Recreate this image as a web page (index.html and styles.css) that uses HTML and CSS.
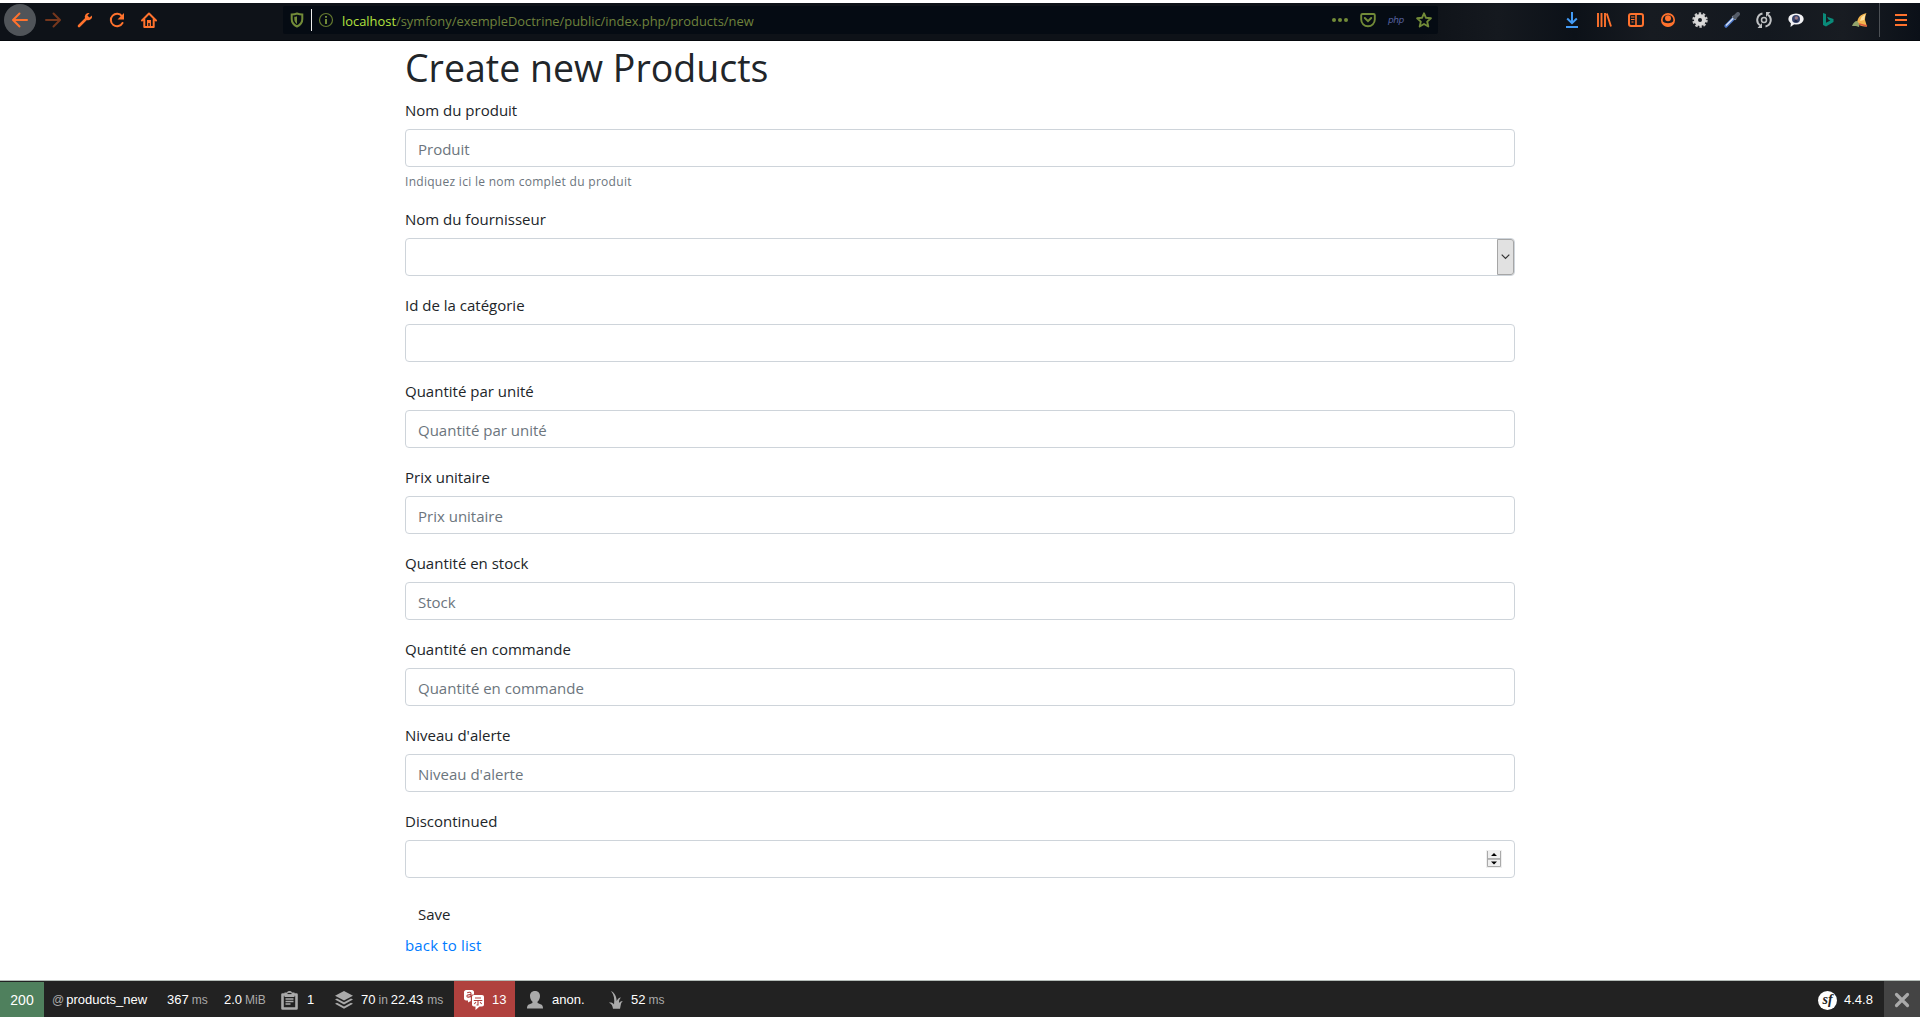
FILE: index.html
```html
<!DOCTYPE html>
<html lang="fr">
<head>
<meta charset="utf-8">
<title>Create new Products</title>
<link rel="stylesheet" href="styles.css">
</head>
<body>
<header class="browser">
  <nav class="nav-buttons">
    <span class="cell back"><svg width="18" height="16" viewBox="0 0 18 16"><path d="M16 8H2.500M8.500 1.500L2 8l6.500 6.500" fill="none" stroke="#ff722d" stroke-width="2" stroke-linecap="round" stroke-linejoin="round"/></svg></span>
    <span class="cell"><svg width="18" height="16" viewBox="0 0 18 16"><path d="M2 8h13.500M9.500 1.500L16 8l-6.500 6.500" fill="none" stroke="#76371d" stroke-width="2" stroke-linecap="round" stroke-linejoin="round"/></svg></span>
    <span class="cell"><svg width="16" height="16" viewBox="0 0 16 16"><path d="M2 14l7-7" stroke="#ff722d" stroke-width="2.600" stroke-linecap="round"/><path d="M12.600 1A4 4 0 0 0 8 6.300L9.700 8A4 4 0 0 0 15 3.400l-2.600 2.200-2-2z" fill="#ff722d"/></svg></span>
    <span class="cell"><svg width="16" height="16" viewBox="0 0 16 16"><path d="M13.500 11A6.200 6.200 0 1 1 13 4.300" fill="none" stroke="#ff722d" stroke-width="2" stroke-linecap="round"/><path d="M15 1v6.500H8.500z" fill="#ff722d"/></svg></span>
    <span class="cell"><svg width="16" height="16" viewBox="0 0 16 16"><path d="M1 8.500L8 1.500l7 7M3.300 7.500V15h9.400V7.500" fill="none" stroke="#ff722d" stroke-width="2" stroke-linecap="round" stroke-linejoin="round"/><path d="M6 8h4v6H8.700v-3H7.300v3H6z" fill="#ff722d"/></svg></span>
  </nav>
  <div class="urlbar">
    <span class="shield"><svg width="14" height="16" viewBox="0 0 14 16"><path d="M7 1.500c2 .8 3.800 1 5.300 1V7c0 3.500-2 6-5.300 7.500C3.700 13 1.700 10.500 1.700 7V2.500c1.500 0 3.300-.2 5.300-1z" fill="none" stroke="#728b38" stroke-width="2"/><path d="M7 4.200c-1 .4-1.800.6-2.700.6V7c0 2.300 1 3.700 2.700 4.900z" fill="#728b38"/></svg></span>
    <span class="url-divider"></span>
    <span class="info"><svg width="16" height="16" viewBox="0 0 16 16"><circle cx="8" cy="8" r="6.500" fill="none" stroke="#64792f" stroke-width="1.200"/><path d="M8 7v5M8 4v1.800" stroke="#728b38" stroke-width="2"/></svg></span>
    <span class="url"><b>localhost</b>/symfony/exempleDoctrine/public/index.php/products/new</span>
    <span class="url-actions">
      <svg width="16" height="16" viewBox="0 0 16 16"><g fill="#728b38"><circle cx="2" cy="8" r="2"/><circle cx="8" cy="8" r="2"/><circle cx="14" cy="8" r="2"/></g></svg>
      <svg width="16" height="16" viewBox="0 0 16 16"><path d="M2.500 2h11c.6 0 1.300.4 1.300 1.200V7.500a6.800 6.800 0 0 1-13.600 0V3.200C1.200 2.400 1.900 2 2.500 2z" fill="none" stroke="#728b38" stroke-width="1.900"/><path d="M4.800 6L8 9.200 11.200 6" fill="none" stroke="#728b38" stroke-width="2" stroke-linecap="round"/></svg>
      <i class="php">php</i>
      <svg width="16" height="16" viewBox="0 0 16 16"><path d="M8 1.300l2 4.500 4.900.5-3.700 3.300 1.100 4.900L8 12l-4.300 2.500 1.100-4.900L1.100 6.300 6 5.800z" fill="none" stroke="#728b38" stroke-width="1.900" stroke-linejoin="round"/></svg>
    </span>
  </div>
  <div class="extensions">
    <span class="cell"><svg width="14" height="16" viewBox="0 0 14 16"><path d="M7 0v11M2.200 6.500L7 11.200l4.800-4.700M1 15h12" fill="none" stroke="#439bf5" stroke-width="2"/></svg></span>
    <span class="cell"><svg width="16" height="16" viewBox="0 0 16 16"><path d="M2 1v14M5.500 1v14M9 1v14M10.800 1.500L15 14.500" fill="none" stroke="#ff722d" stroke-width="1.900"/></svg></span>
    <span class="cell"><svg width="16" height="16" viewBox="0 0 16 16"><rect x="1" y="2" width="14" height="12" rx="2" fill="none" stroke="#ff722d" stroke-width="2"/><path d="M8 2v12" stroke="#ff722d" stroke-width="1.600"/><path d="M3 5h3.500M3 7.500h3.500M3.500 10h2" stroke="#ff722d"/></svg></span>
    <span class="cell"><svg width="16" height="16" viewBox="0 0 16 16"><circle cx="8" cy="8" r="6.200" fill="none" stroke="#ff722d" stroke-width="1.700"/><circle cx="8" cy="6.300" r="3" fill="#ff722d"/><path d="M3 9.500c1.500 2.200 8.500 2.200 10 0l.5 1.500c-2 4.500-9 4.500-11 0z" fill="#ff722d"/></svg></span>
    <span class="cell"><svg width="16" height="16" viewBox="0 0 16 16"><circle cx="8" cy="8" r="6.200" fill="none" stroke="#c5c5c5" stroke-width="3" stroke-dasharray="2.300 1.595"/><circle cx="8" cy="8" r="4" fill="none" stroke="#d8d8d8" stroke-width="4"/></svg></span>
    <span class="cell"><svg width="16" height="16" viewBox="0 0 16 16"><path d="M2 14l8-8" stroke="#4d78c8" stroke-width="3.200" stroke-linecap="round"/><path d="M2 13.500l7.500-7.500" stroke="#d8e3f4" stroke-width="1.200"/><path d="M8.500 4l3.500 3.500" stroke="#8b9099" stroke-width="2"/><path d="M11 5l3-3" stroke="#555c68" stroke-width="4" stroke-linecap="round"/></svg></span>
    <span class="cell"><svg width="16" height="16" viewBox="0 0 16 16"><path d="M6.500 1.500A6.600 6.600 0 0 0 4 13.300M9.500 14.500A6.600 6.600 0 0 0 12 2.700" fill="none" stroke="#bfc1c3" stroke-width="2"/><path d="M6 11v5H1.500zM10 5V0h4.500z" fill="#bfc1c3"/><circle cx="8" cy="8" r="2.500" fill="none" stroke="#bfc1c3" stroke-width="1.500"/></svg></span>
    <span class="cell"><svg width="16" height="16" viewBox="0 0 16 16"><ellipse cx="8" cy="7" rx="7.700" ry="5.500" fill="#f2f2f4"/><path d="M3 10l-.5 5L7 11.500z" fill="#f2f2f4"/><circle cx="8" cy="7" r="4" fill="#38436b"/><circle cx="8.300" cy="6" r="1.700" fill="#9c7a82"/><path d="M5.500 9.500L8 7.500l2 2.500z" fill="#161e3b"/></svg></span>
    <span class="cell"><svg width="16" height="16" viewBox="0 0 16 16"><path d="M3 1l3 1v8.800l4.400-2.300-2-1L7 4.700l6.500 2.400V10L6 14.500 3 13z" fill="#0a8a79"/></svg></span>
    <span class="cell"><svg width="16" height="16" viewBox="0 0 16 16"><path d="M14.500 1C10 2 7 4 6 7l-1 3c2 4 6 5 10 4.500L13 8c0-3 .5-5 1.500-7z" fill="#f3b44d"/><path d="M13.500 2L9.500 5 8 9l4-1z" fill="#ffe2a1"/><path d="M5 9c-2 0-4 2-5 5h4l3 1c1-2 0-4-2-6z" fill="#91a36c"/><path d="M7 12l8 2" stroke="#d8573d" stroke-width="1.500"/></svg></span>
    <span class="ext-divider"></span>
    <span class="menu"><svg width="12" height="12" viewBox="0 0 12 12"><path d="M0 1h12M0 6h12M0 11h12" stroke="#ff722d" stroke-width="2"/></svg></span>
  </div>
</header>

<main class="container">
  <h1>Create new Products</h1>
  <form>
    <div class="group"><label for="name">Nom du produit</label><input class="control" id="name" placeholder="Produit"><small>Indiquez ici le nom complet du produit</small></div>
    <div class="group"><label for="supplier">Nom du fournisseur</label>
      <div class="control select" id="supplier"><span class="select-arrow"><svg width="9" height="6" viewBox="0 0 9 6"><path d="M.7.7l3.800 3.800L8.300.7" fill="none" stroke="#333" stroke-width="1.200"/></svg></span></div></div>
    <div class="group"><label for="category">Id de la catégorie</label><input class="control" id="category"></div>
    <div class="group"><label for="quantity">Quantité par unité</label><input class="control" id="quantity" placeholder="Quantité par unité"></div>
    <div class="group"><label for="price">Prix unitaire</label><input class="control" id="price" placeholder="Prix unitaire"></div>
    <div class="group"><label for="stock">Quantité en stock</label><input class="control" id="stock" placeholder="Stock"></div>
    <div class="group"><label for="order">Quantité en commande</label><input class="control" id="order" placeholder="Quantité en commande"></div>
    <div class="group"><label for="level">Niveau d'alerte</label><input class="control" id="level" placeholder="Niveau d'alerte"></div>
    <div class="group"><label for="discontinued">Discontinued</label>
      <div class="control number" id="discontinued"><svg width="16" height="18" viewBox="0 0 16 18"><path d="M0 0h16v18H0z" fill="#efefef"/><path d="M1.500 1v15.500h13V1M1 8.800h14" fill="none" stroke="#aaa"/><path d="M1 8.300h14v1.400H1z" fill="#aaa"/><path d="M8 3L5 6h6zM8 14.500l-3-3h6z" fill="#000"/></svg></div></div>
    <button type="button" class="save">Save</button>
  </form>
  <a class="back-link" href="#">back to list</a>
</main>

<footer class="toolbar">
  <div class="block status">200</div>
  <div class="block request"><span class="unit">@</span><span>products_new</span></div>
  <div class="block time"><span>367</span><span class="unit">ms</span></div>
  <div class="block memory"><span>2.0</span><span class="unit">MiB</span></div>
  <div class="block forms"><svg width="17" height="19" viewBox="0 0 17 19"><path d="M1.500 3.500h14v14h-14z" fill="none" stroke="#aaa" stroke-width="2.600" stroke-linejoin="round"/><path d="M3.500 1.500h2.500c.5-2 4.500-2 5 0h2.500V6h-10z" fill="#aaa"/><path d="M6.500 2.500h4" stroke="#222" stroke-width="1.200"/><path d="M4.500 8h8M4.500 10.500h8M4.500 13h5" stroke="#aaa" stroke-width="1.500"/></svg><span>1</span></div>
  <div class="block db"><svg width="18" height="18" viewBox="0 0 18 18"><path d="M9 0l9 4.700-9 4.700L0 4.700z" fill="#aaa"/><path d="M0 8.500l2-1 7 3.700 7-3.700 2 1-9 4.900zM0 12.700l2-1 7 3.700 7-3.700 2 1L9 17.800z" fill="#aaa"/></svg><span>70</span><span class="unit">in</span><span>22.43</span><span class="unit">ms</span></div>
  <div class="block translation"><svg width="20" height="20" viewBox="0 0 20 20"><path d="M2 0h6c1 0 2 1 2 2v2.500H9C7.500 4.500 6.800 5.500 6.800 7v4L4 12.500V10.500H2c-1 0-2-.8-2-2V2C0 1 1 0 2 0z" fill="#fff"/><path d="M3.200 2.800c1.500-.8 3.800-.8 3.800.8v3.600M7 4.800c-3-.5-4.500.5-4 1.700.5 1 2.700.8 4-.6" fill="none" stroke="#b0413e" stroke-width="1.100"/><path d="M10 5h8c1.200 0 2 .8 2 2v7.500c0 1.200-.8 2-2 2h-2.500L11.500 20v-3.500H10c-1.200 0-2-.8-2-2V7c0-1.200.8-2 2-2z" fill="#fff"/><path d="M11 8h6M9.800 10.500h8.500M14 10.500V15h-1.500M12 12l-1.700 2M16 12l1.700 2" fill="none" stroke="#b0413e" stroke-width="1.100"/></svg><span>13</span></div>
  <div class="block user"><svg width="16" height="18" viewBox="0 0 16 18"><path d="M8 0c3.400 0 5 2.200 5 5 0 2.500-1.100 4.500-2.500 5.800l.1 1.200 2.900 1.200c1.900.6 2.500 2 2.500 4.300H0c0-2.300.6-3.700 2.500-4.300L5.400 12l.1-1.200C4.100 9.500 3 7.500 3 5c0-2.800 1.600-5 5-5z" fill="#aaa"/></svg><span>anon.</span></div>
  <div class="block twig"><svg width="14" height="18" viewBox="0 0 14 18"><path d="M2 0c4 2 5.500 6 5.700 10C8.500 8 10 6.700 12 6.500c-1.800 1.500-2 3-2 5.500 1-1.500 2-2 4-1.800-2.500 1.500-2 4-3 7.500H4c-.5-3-1.200-4.800-4-6 2.300-.3 3.800.2 5 1.700C5.700 8.500 5.200 4 2 0z" fill="#aaa"/></svg><span>52</span><span class="unit">ms</span></div>
  <div class="block version"><span class="sf-logo">sf</span><span>4.4.8</span></div>
  <div class="block close"><svg width="16" height="16" viewBox="0 0 16 16"><path d="M2.500 2.500l11 11M13.500 2.500l-11 11" stroke="#aaa" stroke-width="3.200" stroke-linecap="round"/></svg></div>
</footer>
</body>
</html>
```
FILE: styles.css
```css
* { box-sizing: border-box; }
body {
  margin: 0;
  height: 1021px;
  padding: 3px 0 4px;
  display: flex;
  flex-direction: column;
  background: #fff;
  color: #212529;
  font: 15px/24px "Open Sans", "Noto Sans", sans-serif;
  overflow: hidden;
}
svg { display: block; flex: none; }

/* Browser chrome */
.browser {
  height: 38px;
  flex: none;
  display: flex;
  background: linear-gradient(90deg, #0e1218 0 74%, #15191f 78%, #0c1118 82%, #171b21 86%, #13181f 92%, #181c22 96%, #0b1018);
  border-bottom: 1px solid #05080c;
}
.nav-buttons { width: 283px; padding-left: 4px; display: flex; }
.cell { width: 32px; height: 34px; display: flex; align-items: center; justify-content: center; }
.nav-buttons .back { height: 32px; margin-top: 1px; border-radius: 50%; background: #505459; }
.nav-buttons .back + .cell { margin-left: 1px; }
.urlbar {
  width: 1155px;
  height: 28px;
  margin-top: 3px;
  padding-left: 7px;
  display: flex;
  align-items: center;
  background: #050b13;
  border-radius: 2px;
}
.url-divider { width: 1px; height: 22px; margin: 0 6px 0 7px; background: #eee; }
.url { margin-left: 8px; padding-top: 2px; color: #6f823c; font-size: 12.900px; white-space: nowrap; }
.url b { color: #b4e33f; font-weight: 400; }
.url-actions { margin-left: auto; padding-right: 6px; display: flex; align-items: center; gap: 12px; }
.php { width: 16px; color: #56619f; font: italic 9px/16px "DejaVu Sans", sans-serif; letter-spacing: -.4px; }
.extensions { flex: 1; padding-left: 118px; display: flex; }
.ext-divider { width: 1px; height: 34px; margin-left: 3px; background: #4c5055; }
.menu { height: 34px; margin-left: 15px; display: flex; align-items: center; }

/* Form */
.container { width: 1110px; margin: 0 auto; flex: 1; }
h1 { height: 48px; margin: 0 0 8px; padding-top: 3px; font-size: 37.500px; line-height: 48px; font-weight: 400; }
.group { margin-bottom: 16px; }
label { display: block; height: 24px; padding-top: 1px; margin-bottom: 8px; }
.control {
  display: block;
  width: 100%;
  height: 38px;
  padding: 7px 12px 5px;
  border: 1px solid #ced4da;
  border-radius: 4px;
  background: #fff;
  color: #495057;
  font: inherit;
}
.control::placeholder { color: #6c757d; opacity: 1; }
small {
  display: block;
  height: 19.200px;
  margin-top: 4px;
  padding-top: 1px;
  color: #6c757d;
  font-size: 12px;
  line-height: 19.200px;
  letter-spacing: .29px;
}
.select { padding: 0; display: flex; justify-content: flex-end; }
.select-arrow {
  width: 17px;
  display: flex;
  align-items: center;
  justify-content: center;
  border: 1px solid #a6a6a6;
  border-radius: 0 3px 3px 0;
  background: #e1e1e1;
}
.number { display: flex; align-items: center; justify-content: flex-end; padding: 0 12px 0 0; }
.save {
  display: block;
  height: 38px;
  padding: 7px 12px 5px;
  border: 1px solid transparent;
  background: transparent;
  color: #212529;
  font: inherit;
}
.back-link {
  display: block;
  width: max-content;
  padding-top: 1px;
  color: #007bff;
  letter-spacing: .15px;
  text-decoration: none;
}

/* Debug toolbar */
.toolbar {
  height: 37px;
  flex: none;
  display: flex;
  border-top: 1px solid #b5bdb8;
  background: #222;
  color: #fff;
  font: 13px/36px "Liberation Sans", Arial, sans-serif;
}
.block { display: flex; align-items: center; white-space: nowrap; }
.block svg { margin-top: 2px; }
.block span:not(.sf-logo) { padding-top: 1px; }
.unit { color: #aaa; font-size: 12px; }
.status { width: 44px; margin-top: 1px; justify-content: center; background: #4f805d; font-size: 14px; }
.request { width: 114px; padding-left: 8px; gap: 2px; }
.time { width: 58px; padding-left: 9px; gap: 3px; }
.memory { width: 65px; padding-left: 8px; gap: 3px; }
.forms { width: 53px; gap: 9px; }
.db { width: 120px; padding-left: 1px; gap: 3px; }
.db svg { margin-right: 5px; }
.db .unit:last-child { margin-left: 1px; }
.translation { width: 61px; padding-left: 10px; gap: 8px; background: #b0413e; }
.user { width: 94px; padding-left: 12px; gap: 9px; }
.twig { gap: 3px; }
.twig svg { margin-right: 5px; }
.version { margin-left: auto; width: 66px; gap: 7px; }
.sf-logo {
  width: 19px;
  height: 19px;
  margin-top: 2px;
  border-radius: 50%;
  background: #fff;
  color: #222;
  font: italic bold 14px/17px "Liberation Serif", serif;
  text-align: center;
}
.close { width: 36px; justify-content: center; background: #444; }
```
